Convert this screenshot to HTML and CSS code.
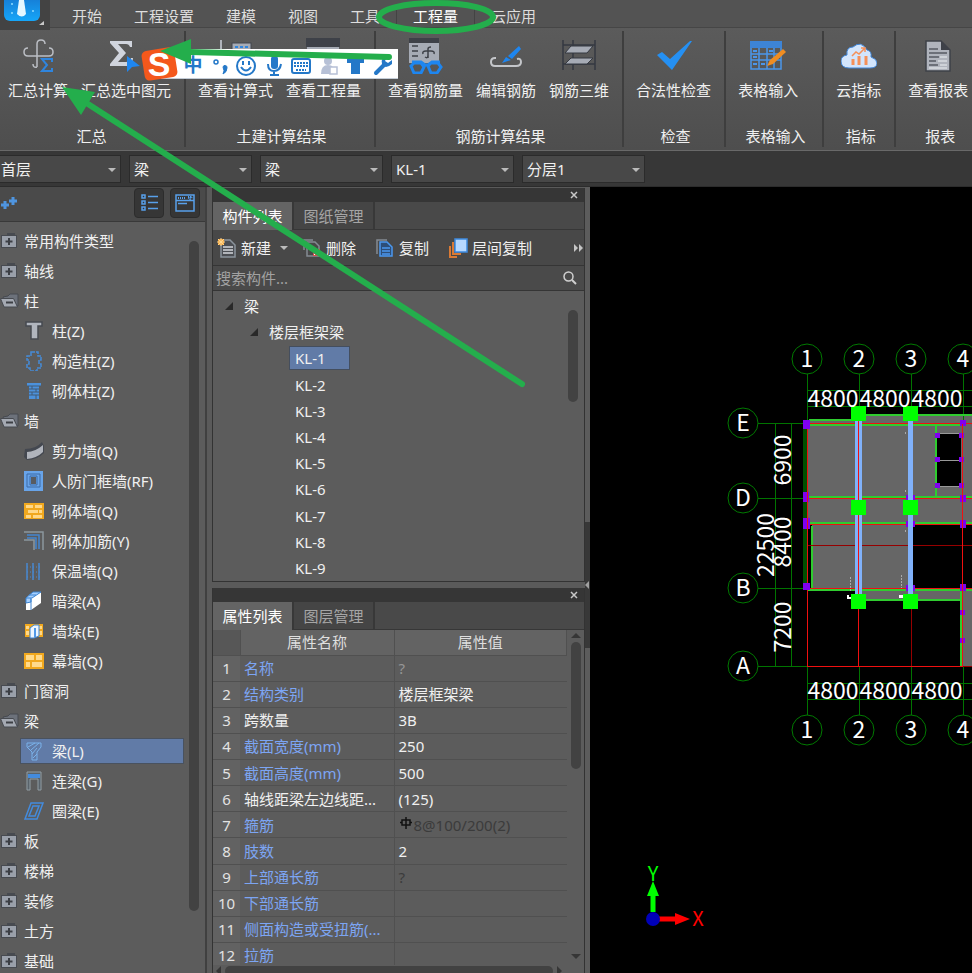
FILE: index.html
```html
<!DOCTYPE html>
<html lang="zh-CN">

<head>
  <meta charset="utf-8">
  <title>工程量</title>
  <link rel="stylesheet" href="styles.css">
</head>

<body>

  <!-- Shared icons -->
  <svg class="icon-defs" aria-hidden="true">
    <symbol id="folder-closed" viewBox="0 0 20 18">
      <path d="M7 1h8v3H7z" fill="#474a50"/>
      <rect x="1.5" y="3.500" width="15" height="12" fill="#9aa0aa" stroke="#474a50"/>
      <path d="M9 6v7M5.500 9.500h7" stroke="#3c3f45" stroke-width="2"/>
    </symbol>
    <symbol id="folder-open" viewBox="0 0 20 18">
      <path d="M3 5l5-1 2-2h8v12H6z" fill="#6c717a" stroke="#474a50"/>
      <path d="M0.500 6.500h13l4 8.500H4z" fill="#a4a9b2" stroke="#474a50"/>
      <path d="M6 10.500h7" stroke="#3c3f45" stroke-width="2"/>
    </symbol>
  </svg>

  <div class="app">

    <header class="menu-bar">
      <button class="app-logo" type="button" aria-label="主菜单">
        <svg width="50" height="30" viewBox="0 0 50 30">
          <defs><linearGradient id="logo-blue" x1="0" y1="0" x2="0" y2="1"><stop offset="0" stop-color="#1668c4"/><stop offset="1" stop-color="#16a6f8"/></linearGradient></defs>
          <rect x="4" y="-14" width="36" height="35" rx="6" fill="url(#logo-blue)"/>
          <path d="M19 0h5l2 14q-4 5-9 0z" fill="#e6f7ff"/>
          <circle cx="12" cy="4" r="1" fill="#8fdcff"/><circle cx="33" cy="11" r="1" fill="#8fdcff"/><circle cx="12" cy="13" r="1" fill="#8fdcff"/>
          <path d="M44 21v4h-5z" fill="#c8c8c8"/>
        </svg>
      </button>
      <nav class="menu-tabs">
        <button type="button">开始</button>
        <button type="button">工程设置</button>
        <button type="button">建模</button>
        <button type="button">视图</button>
        <button type="button">工具</button>
        <button type="button" class="current">工程量</button>
        <button type="button">云应用</button>
      </nav>
    </header>

    <div class="ribbon">
      <section class="ribbon-group ribbon-group-first">
        <div class="ribbon-buttons">
          <button type="button">
            <svg class="ribbon-icon" viewBox="0 0 36 36">
              <path d="M17 29V6q0-4 4-4t4 4M8 10q-4 0-4 4t4 4h21q4 0 4-4t-4-4M17 29q-4 1-4-3" fill="none" stroke="#bcbfc5" stroke-width="1.500"/>
              <path d="M32 24v-3H22l5 6-5 6h10v-3" fill="none" stroke="#2f85de" stroke-width="2"/>
            </svg>
            <span>汇总计算</span>
          </button>
          <button type="button">
            <svg class="ribbon-icon" viewBox="0 0 36 36">
              <path d="M2 3h22v6h-2q-1-3-4-3H10l8 9-8 9h8q4 0 5-4h2l-1 8H2v-2l9-11L2 5z" fill="#d0d4dd"/>
              <path d="M19 18v16l5-5 8-1z" fill="#1e86f0"/>
            </svg>
            <span>汇总选中图元</span>
          </button>
        </div>
        <h2>汇总</h2>
      </section>
      <section class="ribbon-group">
        <div class="ribbon-buttons">
          <button type="button">
            <svg class="ribbon-icon" viewBox="0 0 36 36">
              <path d="M3 2v28" stroke="#b0b4bc" stroke-width="2"/>
              <rect x="14" y="5" width="19" height="24" fill="#a6abb5" stroke="#42464e"/>
              <path d="M17 9h13M17 13h13" stroke="#2f85de" stroke-width="2" stroke-dasharray="3 2"/>
            </svg>
            <span>查看计算式</span>
          </button>
          <button type="button">
            <svg class="ribbon-icon" viewBox="0 0 36 36">
              <rect x="0" y="0" width="34" height="9" fill="#3e4148"/>
              <rect x="1" y="9" width="32" height="20" fill="#a6abb5"/>
            </svg>
            <span>查看工程量</span>
          </button>
        </div>
        <h2>土建计算结果</h2>
      </section>
      <section class="ribbon-group">
        <div class="ribbon-buttons">
          <button type="button">
            <svg class="ribbon-icon" viewBox="0 0 36 36">
              <rect x="1" y="0" width="30" height="5" fill="#3e4148"/>
              <rect x="1" y="5" width="30" height="20" fill="#a6abb5"/>
              <path d="M4 8h6M4 13h6M4 18h6M20 20V11q0-2 3-2M15 16q-1-3 3-3h5q4 0 3 3M20 17q0 4-3 2" fill="none" stroke="#3e4148" stroke-width="1.500"/>
              <path d="M4 24h9l4 3h3l4-3h8M3 28l3-3h7l3 4-3 6H6zM20 28l3-3h7l3 4-4 6h-6z" fill="none" stroke="#1e86f0" stroke-width="3"/>
            </svg>
            <span>查看钢筋量</span>
          </button>
          <button type="button">
            <svg class="ribbon-icon" viewBox="0 0 36 36">
              <path d="M8 20H7q-4 0-4 4t4 4h21q5 0 5-4t-4-3" fill="none" stroke="#c4c6ca" stroke-width="2"/>
              <path d="M14 25l4-6 5 3zM20 18L31 8l2 3-9 10z" fill="#1e86f0"/>
            </svg>
            <span>编辑钢筋</span>
          </button>
          <button type="button">
            <svg class="ribbon-icon" viewBox="0 0 36 36">
              <path d="M2 2v30M12 2v30M34 2v30M2 7h32M2 26h32" stroke="#353941" stroke-width="1.500"/>
              <path d="M10 8h22l-6 7H4zM10 20h22l-6 6H4z" fill="#a6abb5" stroke="#353941"/>
            </svg>
            <span>钢筋三维</span>
          </button>
        </div>
        <h2>钢筋计算结果</h2>
      </section>
      <section class="ribbon-group">
        <div class="ribbon-buttons">
          <button type="button">
            <svg class="ribbon-icon" viewBox="0 0 36 36"><path d="M1 17l5-3 8 7L34 3h2L16 32z" fill="#2590f3"/></svg>
            <span>合法性检查</span>
          </button>
        </div>
        <h2>检查</h2>
      </section>
      <section class="ribbon-group ribbon-group-table">
        <div class="ribbon-buttons">
          <button type="button">
            <svg class="ribbon-icon" viewBox="0 0 36 36">
              <path d="M0 3h32v7H0z" fill="#3d84d6"/>
              <path d="M1 10v21h30V10M1 16h30M1 22h30M9 10v21M17 10v21M24 10v21" fill="none" stroke="#4b96ea" stroke-width="1.500"/>
              <path d="M3 13h4M3 19h4M3 26h4M19 13h4M11 26h4" stroke="#4b96ea" stroke-width="2"/>
              <path d="M17 28l3-6L33 11l3 3-13 12z" fill="#f08d22"/>
            </svg>
            <span>表格输入</span>
          </button>
        </div>
        <h2>表格输入</h2>
      </section>
      <section class="ribbon-group">
        <div class="ribbon-buttons">
          <button type="button">
            <svg class="ribbon-icon" viewBox="0 0 36 36">
              <path d="M8 30Q0 30 0 23q0-5 6-6-1-8 6-8 8-7 14 3 5 1 4 7 6 2 6 6 0 5-7 5z" fill="#d3e5fc" stroke="#4187da"/>
              <path d="M12 27v-6M18 27v-9M25 27v-9" stroke="#f59058" stroke-width="3"/>
              <path d="M11 18l4-4 3 2 6-6M20 10h4v4" fill="none" stroke="#f59058" stroke-width="1.500"/>
            </svg>
            <span>云指标</span>
          </button>
        </div>
        <h2>指标</h2>
      </section>
      <section class="ribbon-group ribbon-group-last">
        <div class="ribbon-buttons">
          <button type="button">
            <svg class="ribbon-icon" viewBox="0 0 36 36">
              <path d="M6 3h15l9 9v21H6z" fill="#b0b4bd" stroke="#3e4148" stroke-width="1.500"/>
              <path d="M21 3v9h9z" fill="#3e4148"/>
              <path d="M9 11h9M9 15h18M9 19h10M9 23h7M9 27h9" stroke="#555a63" stroke-width="1.500"/>
              <path d="M20 19h7M18 23h9M20 27h7M9 30h18" stroke="#d8dbe1" stroke-width="1.500"/>
            </svg>
            <span>查看报表</span>
          </button>
        </div>
        <h2>报表</h2>
      </section>
    </div>

    <div class="selector-bar">
      <div class="selector"><select aria-label="楼层"><option>首层</option></select></div>
      <div class="selector"><select aria-label="构件大类"><option>梁</option></select></div>
      <div class="selector"><select aria-label="构件类型"><option>梁</option></select></div>
      <div class="selector"><select aria-label="构件"><option>KL-1</option></select></div>
      <div class="selector"><select aria-label="分层"><option>分层1</option></select></div>
    </div>

    <main class="workspace">

      <aside class="module-nav">
        <div class="module-header">
          <svg class="module-plus" width="16" height="16" viewBox="0 0 16 16"><path d="M4 6v8M0 10h8M12 2v8M8 6h8" stroke="#4f95e0" stroke-width="3"/></svg>
          <button type="button" aria-label="列表视图">
            <svg width="18" height="18" viewBox="0 0 18 18"><path d="M2 1h3v3H2zM2 7h3v3H2zM2 13h3v3H2zM8 2.500h10M8 8.500h10M8 14.500h10" fill="none" stroke="#58a0ea" stroke-width="1.500"/></svg>
          </button>
          <button type="button" aria-label="面板视图">
            <svg width="20" height="18" viewBox="0 0 20 18"><path d="M1 1h18v16H1zM1 6.500h18M3 9.500h9" fill="none" stroke="#58a0ea" stroke-width="1.500"/><path d="M3 4h8M13 3h4l-2 2z" stroke="#58a0ea" stroke-width="2" stroke-dasharray="1 1"/></svg>
          </button>
        </div>
        <div class="module-body">
          <div class="module-list">
            <button type="button"><svg class="folder-icon"><use href="#folder-closed"/></svg>常用构件类型</button>
            <button type="button"><svg class="folder-icon"><use href="#folder-closed"/></svg>轴线</button>
            <button type="button"><svg class="folder-icon"><use href="#folder-open"/></svg>柱</button>
            <button type="button" class="child"><svg viewBox="0 0 20 20"><path d="M2 1h16v4h-4v13H7V5H2z" fill="#b0b5be" stroke="#454950" stroke-width="1.500"/></svg>柱(Z)</button>
            <button type="button" class="child"><svg viewBox="0 0 20 20"><path d="M7 1h7v4h3v4h-2v4h2v4h-4v3H6v-3H3v-4h2V9H3V5h4z" fill="none" stroke="#458bd6" stroke-width="1.500" stroke-dasharray="4 1"/></svg>构造柱(Z)</button>
            <button type="button" class="child"><svg viewBox="0 0 20 20"><path d="M3 2h14v3h-2v13H5V5H3z" fill="#4c91db"/><path d="M5 8h10M5 11h10M5 14h10M8 5v3M12 8v3M8 11v3M12 14v4M3 5h14" stroke="#415a76"/></svg>砌体柱(Z)</button>
            <button type="button"><svg class="folder-icon"><use href="#folder-open"/></svg>墙</button>
            <button type="button" class="child"><svg viewBox="0 0 20 20"><path d="M1 8q11 0 17-7l2 4v7q-7 7-17 7l-3-3z" fill="#444850"/><path d="M3 11q8 0 16-7v7q-6 6-16 7z" fill="#b0b4bc"/></svg>剪力墙(Q)</button>
            <button type="button" class="child"><svg viewBox="0 0 20 20"><path d="M0 0h19v20H0z" fill="#68a4e9"/><path d="M3 3h13v13H3zM6 5h7v9H6z" fill="none" stroke="#3c6ba5"/><path d="M7 6h5v7H7z" fill="#585b60"/></svg>人防门框墙(RF)</button>
            <button type="button" class="child"><svg viewBox="0 0 20 20"><path d="M0 2h20v16H0z" fill="#f1a81e"/><path d="M2 4h7v3H2zM11 4h7v3h-7zM4 9h10v3H4zM15 9h3v3h-3zM2 14h5v3H2zM9 14h9v3H9z" fill="#ffd888"/></svg>砌体墙(Q)</button>
            <button type="button" class="child"><svg viewBox="0 0 20 20"><path d="M0 1h19v18M0 9h10v10" fill="none" stroke="#8b969d" stroke-width="1.500"/><path d="M3 4h12v14M3 7h9v11" fill="none" stroke="#4385cf" stroke-width="1.500"/></svg>砌体加筋(Y)</button>
            <button type="button" class="child"><svg viewBox="0 0 20 20"><path d="M3 2v17M9 2v17M15 2v17" stroke="#4888cf" stroke-width="1.500"/><path d="M3 6h13M3 11h13M3 16h13" stroke="#4888cf" stroke-dasharray="1 2"/></svg>保温墙(Q)</button>
            <button type="button" class="child"><svg viewBox="0 0 20 20"><path d="M2 7L9 1h8v11l-10 7H2z" fill="#fff"/><path d="M2 7l7-6h8l-9 6zM7 7v4l-5 1V7" fill="#a6d0ff" stroke="#3c83d0"/><path d="M5 4h7M7 8v11" stroke="#3c83d0"/></svg>暗梁(A)</button>
            <button type="button" class="child"><svg viewBox="0 0 20 20"><path d="M1 3h18v13H1z" fill="#f1a81e"/><path d="M2 5h3v3H2zM2 10h3v4H2zM15 5h3v3h-3zM15 10h3v4h-3z" fill="#ffd888"/><path d="M6 7l4-3h5v11l-5 2H6z" fill="#edf6ff" stroke="#3c83d0"/><path d="M10 7h2v9h-2z" fill="#5199e8"/></svg>墙垛(E)</button>
            <button type="button" class="child"><svg viewBox="0 0 20 20"><path d="M0 2h20v16H0z" fill="#f1a81e"/><path d="M2 4h8v5H2zM12 4h6v5h-6zM2 11h4v5H2zM8 11h10v5H8z" fill="#ffda8c"/></svg>幕墙(Q)</button>
            <button type="button"><svg class="folder-icon"><use href="#folder-closed"/></svg>门窗洞</button>
            <button type="button"><svg class="folder-icon"><use href="#folder-open"/></svg>梁</button>
            <button type="button" class="child selected"><svg viewBox="0 0 20 20"><path d="M3 2h14v4l-4 5v8H8v-8L3 6zM4 6l7-4M7 9l8-7M8 13l5-6M9 17l4-4" fill="none" stroke="#7ab2ea"/></svg>梁(L)</button>
            <button type="button" class="child"><svg viewBox="0 0 20 20"><path d="M3 19V1h14v18h-3V8H6v11z" fill="#59636b" stroke="#919da3"/><path d="M4 3h12v4H4z" fill="#438bdd"/></svg>连梁(G)</button>
            <button type="button" class="child"><svg viewBox="0 0 20 20"><path d="M7 2h12l-6 16H1zM9 5h6l-4 10H5z" fill="none" stroke="#438bdd" stroke-width="1.500"/></svg>圈梁(E)</button>
            <button type="button"><svg class="folder-icon"><use href="#folder-closed"/></svg>板</button>
            <button type="button"><svg class="folder-icon"><use href="#folder-closed"/></svg>楼梯</button>
            <button type="button"><svg class="folder-icon"><use href="#folder-closed"/></svg>装修</button>
            <button type="button"><svg class="folder-icon"><use href="#folder-closed"/></svg>土方</button>
            <button type="button"><svg class="folder-icon"><use href="#folder-closed"/></svg>基础</button>
          </div>
          <div class="scroll-track"><div class="scroll-thumb"></div></div>
        </div>
      </aside>

      <div class="panels">

        <section class="panel component-panel">
          <div class="panel-title"><button type="button" aria-label="关闭"><svg width="8" height="8" viewBox="0 0 8 8"><path d="M1 1l6 6M7 1L1 7" stroke="#c8c8c8" stroke-width="1.500"/></svg></button></div>
          <div class="panel-tabs">
            <button type="button" class="current">构件列表</button>
            <button type="button">图纸管理</button>
          </div>
          <div class="panel-tools">
            <button type="button"><svg width="20" height="20" viewBox="0 0 20 20"><path d="M4 2h9l5 5v12H4z" fill="#4c4f54" stroke="#8b949c" stroke-width="1.500"/><path d="M6 9h10M6 12h10M6 15h10" stroke="#d4d7db" stroke-width="1.500"/><path d="M1 1h6v6H1z" fill="#f2a23a"/><path d="M1 1l6 6M7 1L1 7M4 0v8M0 4h8" stroke="#ffd891"/></svg>新建<i class="caret"></i></button>
            <button type="button" class="tool-delete"><svg width="20" height="20" viewBox="0 0 20 20"><path d="M2 12V2h9M5 4h8l4 4v10H5z" fill="none" stroke="#848b92" stroke-width="1.500"/><path d="M11 11h7v7h-7z" fill="#d64d50"/><path d="M12 12l5 5M17 12l-5 5" stroke="#fff"/></svg>删除</button>
            <button type="button" class="tool-copy"><svg width="20" height="20" viewBox="0 0 20 20"><path d="M2 16V2h10" fill="none" stroke="#848b92" stroke-width="1.500"/><path d="M5 4h7l5 5v9H5z" fill="#2d4e78" stroke="#4b98ef" stroke-width="1.500"/><path d="M7 10h8M7 13h8M7 16h8" stroke="#4b98ef" stroke-width="1.500"/></svg>复制</button>
            <button type="button" class="tool-floor"><svg width="20" height="20" viewBox="0 0 20 20"><path d="M2 8v11h7M5 4v12h8" fill="none" stroke="#d97a35" stroke-width="2"/><path d="M7 1h12v13H7z" fill="#b6d8ff" stroke="#3e8ae0" stroke-width="1.500"/></svg>层间复制</button>
            <button type="button" class="tool-more" aria-label="更多"><svg width="10" height="8" viewBox="0 0 10 8"><path d="M0 0l4 4-4 4zM5 0l4 4-4 4z" fill="#c5c5c5"/></svg></button>
          </div>
          <div class="panel-search">
            <input type="text" placeholder="搜索构件..." aria-label="搜索构件">
            <svg width="14" height="14" viewBox="0 0 14 14"><circle cx="5.500" cy="5.500" r="4.500" fill="none" stroke="#d0d0d0" stroke-width="1.500"/><path d="M9 9l4 4" stroke="#d0d0d0" stroke-width="2"/></svg>
          </div>
          <div class="tree-body">
            <ul class="tree">
              <li class="level-1"><svg width="8" height="8" viewBox="0 0 8 8"><path d="M8 0v8H0z" fill="#292929"/></svg><span>梁</span></li>
              <li class="level-2"><svg width="8" height="8" viewBox="0 0 8 8"><path d="M8 0v8H0z" fill="#292929"/></svg><span>楼层框架梁</span></li>
              <li class="level-3 selected"><span>KL-1</span></li>
              <li class="level-3"><span>KL-2</span></li>
              <li class="level-3"><span>KL-3</span></li>
              <li class="level-3"><span>KL-4</span></li>
              <li class="level-3"><span>KL-5</span></li>
              <li class="level-3"><span>KL-6</span></li>
              <li class="level-3"><span>KL-7</span></li>
              <li class="level-3"><span>KL-8</span></li>
              <li class="level-3"><span>KL-9</span></li>
            </ul>
            <div class="scroll-track"><div class="scroll-thumb"></div></div>
          </div>
        </section>

        <section class="panel property-panel">
          <div class="panel-title"><button type="button" aria-label="关闭"><svg width="8" height="8" viewBox="0 0 8 8"><path d="M1 1l6 6M7 1L1 7" stroke="#c8c8c8" stroke-width="1.500"/></svg></button></div>
          <div class="panel-tabs">
            <button type="button" class="current">属性列表</button>
            <button type="button">图层管理</button>
          </div>
          <div class="property-body">
            <div class="property-clip">
              <table class="property-table">
                <thead>
                  <tr><th class="index"></th><th class="name">属性名称</th><th>属性值</th></tr>
                </thead>
                <tbody>
                  <tr><td>1</td><td class="editable">名称</td><td class="unknown">?</td></tr>
                  <tr><td>2</td><td class="editable">结构类别</td><td>楼层框架梁</td></tr>
                  <tr><td>3</td><td>跨数量</td><td>3B</td></tr>
                  <tr><td>4</td><td class="editable">截面宽度(mm)</td><td>250</td></tr>
                  <tr><td>5</td><td class="editable">截面高度(mm)</td><td>500</td></tr>
                  <tr><td>6</td><td>轴线距梁左边线距...</td><td>(125)</td></tr>
                  <tr><td>7</td><td class="editable">箍筋</td><td class="dim"><svg width="15" height="14" viewBox="0 0 15 14"><path d="M7 0v12M3 3h8v5H3zM1 5.500h2M11 5.500h2" fill="none" stroke="#111" stroke-width="1.500"/></svg>8@100/200(2)</td></tr>
                  <tr><td>8</td><td class="editable">肢数</td><td>2</td></tr>
                  <tr><td>9</td><td class="editable">上部通长筋</td><td class="dim">?</td></tr>
                  <tr><td>10</td><td class="editable">下部通长筋</td><td></td></tr>
                  <tr><td>11</td><td class="editable">侧面构造或受扭筋(...</td><td></td></tr>
                  <tr><td>12</td><td class="editable">拉筋</td><td></td></tr>
                </tbody>
              </table>
            </div>
            <div class="scroll-track property-scroll">
              <i class="arrow-up"></i>
              <div class="scroll-thumb"></div>
              <i class="arrow-down"></i>
            </div>
          </div>
          <div class="scroll-row"><i class="arrow-left"></i><div class="scroll-thumb"></div><i class="arrow-right"></i></div>
        </section>

      </div>

      <div class="splitter"><div class="splitter-grip"><svg width="5" height="8" viewBox="0 0 5 8"><path d="M4 0v8L0 4z" fill="#a0a0a0"/></svg></div></div>

      <!-- Drawing area: everything inside the group uses window coordinates -->
      <svg class="drawing">
        <g transform="translate(-590 -187)">
          <g shape-rendering="crispEdges">
            <path class="slab" d="M807 421h52v-7h113v110h-61v66h52v-2h9v78h-9v-66H859v-10h-47v-66h-5z"/>
            <path class="slab-hole" d="M963 525h9v63h-9zM911 525h51v63h-51zM936 434h25v52h-25z"/>
            <path class="axis" d="M807.500 374v49M859 374v40M911 374v40M963 374v50M807.500 667v48M859 667v48M911 667v48M963 667v48M758 423.500h49M758 498.500h49M758 588.500h49M758 666.500h49"/>
            <path class="axis" d="M807 390.500h165M807 406.500h165M807 683.500h165M807 699.500h165M775 423v244M791 423v244"/>
            <path d="M805 423v165" stroke="#005000" stroke-width="4"/>
            <path class="beam-edge" d="M809 420h44M853 415h119M812 526v64M808 590h50M859 600h102M961 590v76M936 424v73M809 425h154M809 497h163M807 523h165M859 590h113"/>
            <path d="M936 433.500h26M936 460.500h26M936 486.500h26" stroke="#999"/>
            <path class="grid-dark" d="M807 545.500h165M911.500 601v66M963 666.500h9"/>
            <path class="grid" d="M807.500 423v244M962.500 423v244M807 423.500h165M807 498.500h165M807 524.500h165M807 588.500h165M807 666.500h155"/>
            <path d="M855 416h7v185h-7z" fill="#80b1fa"/>
            <path class="grid" d="M858.500 421v246"/>
            <path class="node" d="M803 420h7v9h-7zM803 492h6v10h-6zM803 518h7v11h-7zM803 583h7v7h-7zM960 420h6v6h-6zM960 495h6v7h-6zM960 520h6v8h-6zM960 584h6v7h-6zM960 610h5v5h-5zM960 638h5v5h-5zM906 495h9v6h-9zM906 521h9v6h-9zM906 585h9v6h-9zM935 433h5v5h-5zM935 457h5v5h-5zM935 483h5v5h-5zM959 433h5v5h-5zM959 457h5v5h-5zM959 483h5v5h-5z"/>
            <path class="grid" d="M807.500 429v154M962.500 424v240"/>
            <path d="M908 416h5v185h-5z" fill="#80b1fa"/>
            <path d="M847 595v4h5v-2h-3v-2zM899 595h4v3h-4z" fill="#fff"/>
            <path d="M850 577v14M901 575v13M905 432v2M905 490v2M905 530v2" stroke="#aaa" stroke-dasharray="2 1"/>
            <path class="handle" d="M851 406h15v15h-15zM903 406h15v15h-15zM851 500h15v15h-15zM903 500h15v15h-15zM851 594h15v15h-15zM903 594h15v15h-15z"/>
          </g>
          <g class="bubble">
            <circle cx="807" cy="359" r="15"/><circle cx="859" cy="359" r="15"/><circle cx="911" cy="359" r="15"/><circle cx="963" cy="359" r="15"/>
            <circle cx="807" cy="730" r="15"/><circle cx="859" cy="730" r="15"/><circle cx="911" cy="730" r="15"/><circle cx="963" cy="730" r="15"/>
            <circle cx="743" cy="423" r="15"/><circle cx="743" cy="498" r="15"/><circle cx="743" cy="588" r="15"/><circle cx="743" cy="666" r="15"/>
          </g>
          <g class="cad-text">
            <text x="807" y="367">1</text><text x="859" y="367">2</text><text x="911" y="367">3</text><text x="963" y="367">4</text>
            <text x="807" y="738">1</text><text x="859" y="738">2</text><text x="911" y="738">3</text><text x="963" y="738">4</text>
            <text x="743" y="431">E</text><text x="743" y="506">D</text><text x="743" y="596">B</text><text x="743" y="674">A</text>
            <text x="833" y="407">4800</text><text x="885" y="407">4800</text><text x="937" y="407">4800</text>
            <text x="833" y="699">4800</text><text x="885" y="699">4800</text><text x="937" y="699">4800</text>
            <text transform="translate(791 460) rotate(-90)">6900</text>
            <text transform="translate(791 542) rotate(-90)">8400</text>
            <text transform="translate(774 545) rotate(-90)">22500</text>
            <text transform="translate(791 627) rotate(-90)">7200</text>
          </g>
          <path d="M653 912V895" stroke="#0f0" stroke-width="5"/>
          <path d="M647 896l6-15 6 15z" fill="#0f0"/>
          <path d="M659 919h18" stroke="#f00" stroke-width="5"/>
          <path d="M675 913l15 6-15 6z" fill="#f00"/>
          <circle cx="653" cy="919" r="7" fill="#0000b8"/>
          <text class="axis-label" x="653" y="881" fill="#0f0">Y</text>
          <text class="axis-label" x="698" y="926" fill="#f00">X</text>
        </g>
      </svg>

    </main>

    <!-- Floating input method bar -->
    <div class="ime-bar">
      <svg width="257" height="38" viewBox="0 0 257 38">
        <rect x="20" y="4" width="237" height="30" fill="#fff"/>
        <path d="M20 33.500h237" stroke="#c3ccd6"/>
        <rect x="2" y="4" width="33" height="30" rx="5" fill="#f4581c" transform="rotate(-9 18 19)"/>
        <text class="ime-s" x="18" y="31">S</text>
        <text class="ime-zh" x="52" y="27">中</text>
        <circle cx="75" cy="17" r="2" fill="none" stroke="#2478c8" stroke-width="1.500"/>
        <path d="M82 22a2 2 0 1 1 4 1q0 4-4 6 2-3 0-7z" fill="#2478c8" stroke="#2478c8"/>
        <circle cx="105" cy="21" r="9" fill="none" stroke="#2478c8" stroke-width="2"/>
        <path d="M102 16v4M108 16v4M100 22q5 7 10 0" fill="none" stroke="#2478c8" stroke-width="2"/>
        <rect x="130" y="11" width="7" height="13" rx="3" fill="#2478c8"/>
        <path d="M127 19q0 7 6 7t7-7M133 26v4M129 30h9" fill="none" stroke="#2478c8" stroke-width="2"/>
        <rect x="151" y="14" width="18" height="14" rx="2" fill="none" stroke="#2478c8" stroke-width="2"/>
        <path d="M153 18h15M153 21h15M155 25h10" stroke="#2478c8" stroke-width="2" stroke-dasharray="2 1"/>
        <circle cx="187" cy="16" r="4" fill="#b6c0d6"/><path d="M180 29q0-9 7-9t7 9z" fill="#b6c0d6"/>
        <path d="M189 22h7v7h-7z" fill="#fff" stroke="#b6c0d6" stroke-width="1.500"/>
        <path d="M206 14l5-3h7l5 3v4h-4v11h-9V18h-4z" fill="#2478c8"/>
        <path d="M235 28l8-8" stroke="#2478c8" stroke-width="4" stroke-linecap="round"/>
        <path d="M246 12q-7 1-5 7 3 6 10 0v-4l-4 3-3-2z" fill="#2478c8"/>
      </svg>
    </div>

    <!-- Green callouts -->
    <svg class="callouts">
      <ellipse cx="436" cy="17" rx="57" ry="14"/>
      <path d="M190 52L389 57M88 104L522 384"/>
      <path class="arrow-head" d="M160 51l31-12v25zM62 87l33 5-14 23z"/>
    </svg>

  </div>

</body>

</html>
```
FILE: styles.css
```css
* {
  box-sizing: border-box;
}

body {
  margin: 0;
  background: #3a3a3a;
  color: #f0f0f0;
  font-family: "Noto Sans", "Noto Sans CJK SC", sans-serif;
  font-size: 15px;
  line-height: 22px;
}

button,
input,
select {
  font: inherit;
  color: inherit;
  background: none;
  border: none;
  border-radius: 0;
  margin: 0;
  padding: 0;
}

button {
  white-space: nowrap;
}

svg {
  display: block;
  flex-shrink: 0;
}

.icon-defs {
  position: absolute;
  width: 0;
  height: 0;
}

.app {
  position: relative;
  display: flex;
  flex-direction: column;
  height: 100vh;
  overflow: hidden;
}

/* Menu */
.menu-bar {
  display: flex;
  height: 28px;
  background: #535353;
  border-bottom: 1px solid #464646;
}

.app-logo {
  width: 50px;
  height: 30px;
  background: #434343;
  z-index: 1;
}

.menu-tabs {
  display: flex;
  padding: 5px 0 0 6px;
}

.menu-tabs button {
  height: 22px;
  padding: 0 16px;
  color: #dedede;
}

.menu-tabs .current {
  border-left: 1px solid #434343;
  border-right: 1px solid #434343;
  color: #fff;
}

/* Ribbon */
.ribbon {
  display: flex;
  height: 123px;
  overflow: hidden;
  background: linear-gradient(#5b5b5b, #4e4e4e);
  border-bottom: 1px solid #696969;
}

.ribbon-group {
  display: flex;
  flex-direction: column;
  flex-shrink: 0;
  justify-content: space-between;
  margin: 3px 0;
  padding: 7px 13px 0 12px;
  border-right: 2px solid #3e3e3e;
}

.ribbon-group-first {
  padding-left: 8px;
}

.ribbon-group-table {
  width: 98px;
}

.ribbon-group-last {
  border-right: none;
}

.ribbon-buttons {
  display: flex;
  gap: 13px;
}

.ribbon-buttons button {
  display: flex;
  flex-direction: column;
  align-items: center;
  gap: 5px;
}

.ribbon-icon {
  width: 36px;
  height: 36px;
}

.ribbon-group h2 {
  margin: 0;
  padding-left: 4px;
  font-size: 15px;
  font-weight: normal;
  text-align: center;
  white-space: nowrap;
}

/* Drop-downs */
.selector-bar {
  display: flex;
  gap: 8px;
  height: 36px;
  padding: 4px 0;
  background: #373737;
  border-bottom: 1px solid #2c2c2c;
}

.selector {
  position: relative;
  width: 123px;
}

.selector:first-child {
  width: 121px;
}

.selector select {
  width: 100%;
  height: 28px;
  padding: 0 4px;
  appearance: none;
  background: #484848;
  border: 1px solid #2b2b2b;
}

.selector:first-child select {
  padding-left: 1px;
  border-left: none;
}

.selector::after,
.caret {
  border: 4px solid transparent;
  border-top-color: #bbb;
  border-bottom: none;
}

.selector::after {
  content: "";
  position: absolute;
  right: 5px;
  top: 13px;
}

/* Workspace */
.workspace {
  display: flex;
  flex: 1;
  min-height: 0;
  background: #5a5a5a;
}

.scroll-track {
  flex-shrink: 0;
  width: 10px;
}

.scroll-thumb {
  background: #424242;
  border-radius: 5px;
}

.module-nav {
  display: flex;
  flex-direction: column;
  flex-shrink: 0;
  width: 207px;
  background: #5c5c5c;
  border-right: 2px solid #404040;
}

.module-header {
  display: flex;
  align-items: flex-start;
  gap: 6px;
  height: 35px;
  padding: 1px 5px 0 1px;
  background: #4a4a4a;
  border-bottom: 1px solid #393939;
}

.module-plus {
  margin: 7px auto 0 0;
}

.module-header button {
  display: flex;
  align-items: center;
  justify-content: center;
  width: 30px;
  height: 30px;
  background: #363636;
  border: 1px solid #2c2c2c;
  border-radius: 4px;
}

.module-body {
  display: flex;
  flex: 1;
  min-height: 0;
  padding-right: 6px;
  overflow: hidden;
}

.module-list {
  display: flex;
  flex: 1;
  flex-direction: column;
  padding: 4px 5px 0 0;
}

.module-list button {
  display: flex;
  flex-shrink: 0;
  align-items: center;
  height: 30px;
  gap: 4px;
}

.folder-icon {
  width: 20px;
  height: 18px;
}

.module-list .child {
  height: 26px;
  margin: 2px 0 2px 20px;
  padding-left: 3px;
  gap: 8px;
  border: 1px solid transparent;
}

.child svg {
  width: 20px;
  height: 20px;
}

.module-list .selected {
  background: #617ba7;
  border-color: #49525f;
}

.module-body .scroll-thumb {
  height: 670px;
  margin-top: 19px;
}

/* Dock panels */
.panels {
  display: flex;
  flex-direction: column;
  flex-shrink: 0;
  gap: 6px;
  width: 378px;
  padding: 1px 0 0 5px;
}

.panel {
  display: flex;
  flex-direction: column;
  min-height: 0;
  background: #5c5c5c;
  border: 1px solid #333;
  border-top: none;
}

.component-panel {
  flex: 393 1 0;
}

.property-panel {
  flex: 385 1 0;
  border-bottom: none;
}

.panel-title {
  display: flex;
  justify-content: flex-end;
  align-items: center;
  flex-shrink: 0;
  height: 14px;
  padding-right: 6px;
  background: #363636;
}

.panel-tabs {
  display: flex;
  flex-shrink: 0;
  height: 28px;
  background: #494949;
  border-bottom: 1px solid #373737;
}

.panel-tabs button {
  width: 81px;
  background: #454545;
  color: #a5a5a5;
  border-right: 2px solid #383838;
}

.panel-tabs .current {
  height: 28px;
  background: #646464;
  color: #fff;
}

.panel-tools {
  display: flex;
  flex-shrink: 0;
  height: 36px;
  padding-left: 4px;
  background: #484848;
  border-bottom: 1px solid #353535;
}

.panel-tools button {
  display: flex;
  align-items: center;
  gap: 4px;
}

.caret {
  margin-left: 5px;
}

.tool-delete {
  margin-left: 14px;
}

.tool-copy,
.tool-floor {
  margin-left: 19px;
}

.panel-tools .tool-more {
  margin-left: auto;
}

.panel-search {
  display: flex;
  align-items: center;
  flex-shrink: 0;
  height: 25px;
  padding: 0 7px 0 3px;
  background: #4a4a4a;
  border-bottom: 1px solid #353535;
}

.panel-search input {
  flex: 1;
  min-width: 0;
  height: 22px;
  outline: none;
}

.panel-search input::placeholder {
  color: #a2a2a2;
  opacity: 1;
}

.tree-body {
  display: flex;
  flex: 1;
  min-height: 0;
  padding: 2px 6px 0 0;
}

.tree {
  display: flex;
  flex: 1;
  flex-direction: column;
  margin: 0;
  padding: 0;
  list-style: none;
}

.tree li {
  display: flex;
  flex: 1;
  align-items: center;
}

.tree .level-1 {
  padding-left: 12px;
  gap: 11px;
}

.tree .level-2 {
  padding-left: 37px;
  gap: 11px;
}

.tree .level-3 {
  padding-left: 76px;
}

.level-3 span {
  width: 61px;
  padding: 0 5px;
  border: 1px solid transparent;
}

.selected span {
  background: #617ba7;
  border-color: #444e5e;
}

.tree-body .scroll-thumb {
  height: 92px;
  margin-top: 17px;
}

/* Property table */
.property-body {
  display: flex;
  flex: 1;
  min-height: 0;
  padding-right: 3px;
}

.property-clip {
  flex: 1;
  overflow: hidden;
}

.property-table {
  width: 354px;
  height: calc(100% + 4px);
  table-layout: fixed;
  border-collapse: collapse;
}

.property-table th {
  padding: 0;
  height: 25px;
  background: #636363;
  color: #dedede;
  font-weight: normal;
  border-right: 1px solid #505050;
}

.property-table .index {
  width: 27px;
  background: #575757;
}

.property-table .name {
  width: 154px;
}

.property-table td {
  padding: 0 4px;
  border: 1px solid #505050;
  border-left: none;
  border-right: none;
  white-space: nowrap;
}

.property-table td:first-child {
  padding: 0;
  background: #626262;
  color: #e2e2e2;
  text-align: center;
}

.property-table td:nth-child(2) {
  border-right: 1px solid #505050;
}

.property-table .editable {
  color: #7ca5f3;
}

.property-table .unknown {
  color: #969696;
}

.property-table .dim {
  color: #3b3b3b;
}

.dim svg {
  display: inline-block;
}

.property-scroll {
  display: flex;
  flex-direction: column;
  align-items: center;
}

.property-scroll .scroll-thumb {
  width: 10px;
  height: 127px;
  margin: 4px 0 auto;
}

.arrow-up,
.arrow-down,
.arrow-left,
.arrow-right {
  border: 5px solid transparent;
}

.arrow-up {
  margin-top: 3px;
  border-top: none;
  border-bottom-color: #363636;
}

.arrow-down {
  margin-bottom: 6px;
  border-bottom: none;
  border-top-color: #363636;
}

.scroll-row {
  display: flex;
  flex-shrink: 0;
  height: 8px;
  padding: 1px 22px 0 3px;
  gap: 4px;
  overflow: hidden;
}

.scroll-row .scroll-thumb {
  flex: 1;
  height: 10px;
}

.arrow-left {
  border-left: none;
  border-right-color: #363636;
}

.arrow-right {
  border-right: none;
  border-left-color: #363636;
}

.splitter {
  display: flex;
  flex-shrink: 0;
  width: 5px;
  padding-top: 335px;
  background: #5c5c5c;
}

.splitter-grip {
  display: flex;
  align-items: center;
  width: 5px;
  height: 126px;
  background: #383838;
}

/* Drawing */
.drawing {
  flex: 1;
  min-width: 0;
  height: 100%;
  background: #000;
}

.drawing .slab {
  fill: #666;
}

.drawing .slab-hole {
  fill: #000;
}

.drawing .axis {
  stroke: #007400;
}

.drawing .beam-edge {
  fill: none;
  stroke: #2fcc2f;
  stroke-width: 2;
}

.drawing .axis,
.drawing .grid,
.drawing .grid-dark {
  fill: none;
}

.drawing .grid {
  stroke: #f01010;
}

.drawing .grid-dark {
  stroke: #960000;
}

.drawing .node {
  fill: #8000f0;
}

.drawing .handle {
  fill: #0f0;
}

.bubble {
  fill: none;
  stroke: #007a00;
}

.cad-text {
  fill: #fff;
  font-family: "Noto Sans CJK SC", sans-serif;
  font-size: 23px;
  text-anchor: middle;
}

.axis-label {
  font-family: "Noto Sans CJK SC", sans-serif;
  font-size: 20px;
  text-anchor: middle;
}

/* Things floating over the window */
.ime-bar {
  position: absolute;
  left: 141px;
  top: 45px;
  z-index: 2;
}

.ime-s {
  fill: #fff;
  font-family: "Liberation Sans", sans-serif;
  font-size: 34px;
  font-weight: bold;
  text-anchor: middle;
}

.ime-zh {
  fill: #2478c8;
  font-family: "Noto Sans CJK SC", sans-serif;
  font-size: 19px;
  font-weight: bold;
  text-anchor: middle;
}

.callouts {
  position: absolute;
  left: 0;
  top: 0;
  z-index: 3;
  width: 100%;
  height: 100%;
  pointer-events: none;
  fill: none;
  stroke: #24ae4c;
  stroke-width: 6;
  stroke-linecap: round;
}

.callouts .arrow-head {
  fill: #24ae4c;
  stroke: none;
}
```
